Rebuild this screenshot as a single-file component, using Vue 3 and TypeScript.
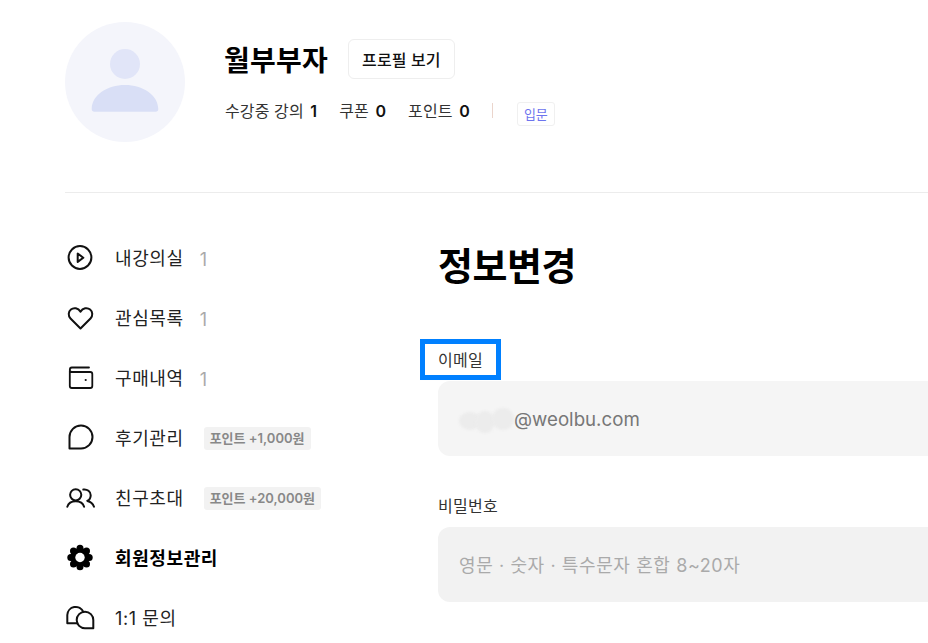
<script setup lang="ts">
interface MenuItem {
  icon: string
  label: string
  count?: string
  badge?: string
  active?: boolean
}
const menu: MenuItem[] = [
  { icon: 'play', label: '내강의실', count: '1' },
  { icon: 'heart', label: '관심목록', count: '1' },
  { icon: 'wallet', label: '구매내역', count: '1' },
  { icon: 'bubble', label: '후기관리', badge: '포인트 +1,000원' },
  { icon: 'users', label: '친구초대', badge: '포인트 +20,000원' },
  { icon: 'gear', label: '회원정보관리', active: true },
  { icon: 'chat', label: '1:1 문의' },
]
const lobes = [0, 45, 90, 135, 180, 225, 270, 315].map((deg) => ({
  cx: 15 + 9.2 * Math.cos((deg * Math.PI) / 180),
  cy: 14.5 + 9.2 * Math.sin((deg * Math.PI) / 180),
}))
</script>

<template>
  <div class="page">
    <header class="profile">
      <svg class="avatar" width="120" height="120" viewBox="0 0 120 120">
        <circle cx="60" cy="60" r="60" fill="#f4f5fb" />
        <circle cx="60" cy="42" r="15" fill="#e1e5f8" />
        <path d="M26.700 87C27 73 42 63 60 63s33 10 33.300 24c0 2-1 2.700-2.700 2.700H29.400c-1.700 0-2.700-.7-2.700-2.700z" fill="#d9dff6" />
      </svg>
      <div class="info">
        <div class="name-row">
          <h2 class="name">월부부자</h2>
          <button class="view-btn">프로필 보기</button>
        </div>
        <div class="stats">
          <span class="stat">수강중 강의 <b>1</b></span>
          <span class="stat">쿠폰 <b>0</b></span>
          <span class="stat">포인트 <b>0</b></span>
          <i class="sep"></i>
          <span class="level">입문</span>
        </div>
      </div>
    </header>
    <div class="content">
      <nav class="menu">
        <a v-for="item in menu" :key="item.label" class="item" :class="{ active: item.active }">
          <svg class="icon" width="30" height="30" viewBox="0 0 30 30" fill="none" stroke="#111" stroke-width="2" stroke-linecap="round" stroke-linejoin="round">
            <template v-if="item.icon === 'play'">
              <circle cx="15" cy="14.500" r="11.400" />
              <path d="M12.700 10.500v8.400l5.600-4.200z" />
            </template>
            <path v-else-if="item.icon === 'heart'" d="M15.500 25.500 5.500 15.500C3 12.900 3.200 8.700 5.900 6.500c2.800-2.300 7.200-1.600 9.600 2.100 2.400-3.700 6.800-4.400 9.600-2.100 2.700 2.200 2.900 6.400.4 9z" />
            <template v-else-if="item.icon === 'wallet'">
              <path d="M4.800 8v15c0 1.300.7 2 2 2h18.500c1.300 0 2-.7 2-2V11c0-1.300-.7-2-2-2H6.800c-1.300 0-2-.5-2-2 0-1.500.7-2.500 2-2.500H24" stroke-width="1.800" />
              <circle cx="20.700" cy="17" r="1.100" fill="#111" stroke="none" />
            </template>
            <path v-else-if="item.icon === 'bubble'" d="M4.500 25.500V14a11.500 11.500 0 1 1 11.500 11.500z" />
            <template v-else-if="item.icon === 'users'">
              <circle cx="10.700" cy="11.800" r="5.600" />
              <path d="M2.300 23.700c1-3.400 4.200-5.400 8.400-5.400s7.400 2 8.400 5.400" />
              <path d="M18.300 6.500c4-.6 7.400 2 7.400 5.700 0 2.700-1.400 4.700-3.400 5.700 3.200.6 5.700 2.800 6.700 5.800" />
            </template>
            <template v-else-if="item.icon === 'gear'">
              <g fill="#000" stroke="none">
                <circle cx="15" cy="14.500" r="9.500" />
                <circle v-for="(l, i) in lobes" :key="i" :cx="l.cx" :cy="l.cy" r="3.500" />
                <circle cx="15" cy="14.500" r="4.700" fill="#fff" />
              </g>
            </template>
            <template v-else>
              <path d="M18.400 9A8.400 8.400 0 0 0 2.300 12v8.300h10.200" />
              <path d="M28.300 25.300V17a8.300 8.300 0 1 0-8.300 8.300z" />
            </template>
          </svg>
          <span class="label">{{ item.label }}</span>
          <span v-if="item.count" class="count">{{ item.count }}</span>
          <span v-if="item.badge" class="badge">{{ item.badge }}</span>
        </a>
      </nav>
      <main class="main">
        <h1 class="title">정보변경</h1>
        <div class="field first">
          <label class="field-label focused">이메일</label>
          <div class="input email">
            <span class="masked"><i></i><i></i><i></i></span>@weolbu.com
          </div>
        </div>
        <div class="field">
          <label class="field-label">비밀번호</label>
          <div class="input placeholder">영문 · 숫자 · 특수문자 혼합 8~20자</div>
        </div>
      </main>
    </div>
  </div>
</template>

<style>
html, body { margin: 0; overflow: hidden; background: #fff; }
</style>

<style scoped>
.page {
  width: 928px;
  height: 643px;
  overflow: hidden;
  padding: 22px 0 0 65px;
  box-sizing: border-box;
  font-family: Inter, "Noto Sans CJK KR", sans-serif;
  color: #111;
}
.profile {
  display: flex;
  gap: 40px;
  height: 170px;
  border-bottom: 1px solid #ececec;
  box-sizing: content-box;
}
.avatar { flex: none; }
.info { padding-top: 17px; }
.name-row { display: flex; align-items: center; gap: 20px; height: 40px; }
.name { margin: 0 0 0 -1px; font-size: 28px; font-weight: 700; letter-spacing: 0.2px; color: #000; }
.view-btn {
  width: 107px;
  height: 40px;
  padding: 0;
  background: #fff;
  border: 1px solid #eee;
  border-radius: 6px;
  font: 500 16px Inter, "Noto Sans CJK KR", sans-serif;
  letter-spacing: 0.1px;
  color: #111;
}
.stats { display: flex; align-items: center; height: 24px; margin-top: 20px; font-size: 16px; letter-spacing: 0.1px; color: #333; }
.stat { margin-right: 22px; white-space: nowrap; position: relative; top: -1px; }
.stat b { font-weight: 600; color: #111; margin-left: 2px; }
.sep { width: 1px; height: 15px; background: #ebd5cc; margin: -1px 24px 0 0; }
.level {
  width: 38px;
  height: 24px;
  line-height: 22px;
  margin-top: 6px;
  box-sizing: border-box;
  border: 1px solid #f0f0f0;
  border-radius: 3px;
  text-align: center;
  font-size: 13px;
  letter-spacing: -0.2px;
  color: #6d74ee;
}
.content { display: flex; }
.menu { width: 373px; flex: none; padding-top: 35px; }
.item { display: flex; align-items: center; height: 60px; font-size: 18px; letter-spacing: 0.6px; color: #222; white-space: nowrap; }
.icon { flex: none; margin-right: 20px; }
.label { line-height: 24px; padding-top: 2px; }
.active .label { font-weight: 700; color: #000; }
.count { margin-left: 16px; color: #aaa; font-size: 18px; padding-top: 2px; }
.badge {
  margin-left: 20px;
  height: 23px;
  line-height: 23px;
  padding: 0 6px;
  background: #f2f2f2;
  border-radius: 3px;
  font-size: 13px;
  font-weight: 600;
  letter-spacing: 0;
  color: #888;
}
.main { width: 560px; flex: none; padding-top: 44px; }
.title { margin: 0; height: 56px; line-height: 56px; font-size: 38px; font-weight: 700; letter-spacing: -0.5px; color: #000; position: relative; top: 1px; }
.field { margin-top: 38px; }
.field.first { margin-top: 53px; }
.field-label { display: block; height: 24px; line-height: 24px; font-size: 16px; letter-spacing: 0.28px; color: #333; width: fit-content; }
.focused { position: relative; outline: 5px solid #0080ff; outline-offset: 0; margin: -2px 0 0 -13px; padding: 4px 13px 4px; height: 23px; }
.input {
  height: 75px;
  line-height: 77px;
  margin-top: 9px;
  padding-left: 21px;
  background: #f2f2f2;
  border-radius: 12px;
  font-size: 18px;
  letter-spacing: 0.6px;
}
.email { background: #f5f5f5; color: #777; display: flex; margin-top: 6px; font-size: 18.700px; letter-spacing: 0; }
.placeholder { color: #aaa; }
.masked { display: block; width: 55px; height: 75px; position: relative; flex: none; }
.masked i { position: absolute; border-radius: 50%; background: #ececec; filter: blur(1px); }
.masked i:nth-child(1) { left: 0; top: 31px; width: 22px; height: 18px; }
.masked i:nth-child(2) { left: 16px; top: 30px; width: 20px; height: 22px; }
.masked i:nth-child(3) { left: 33px; top: 27px; width: 22px; height: 22px; }
</style>
